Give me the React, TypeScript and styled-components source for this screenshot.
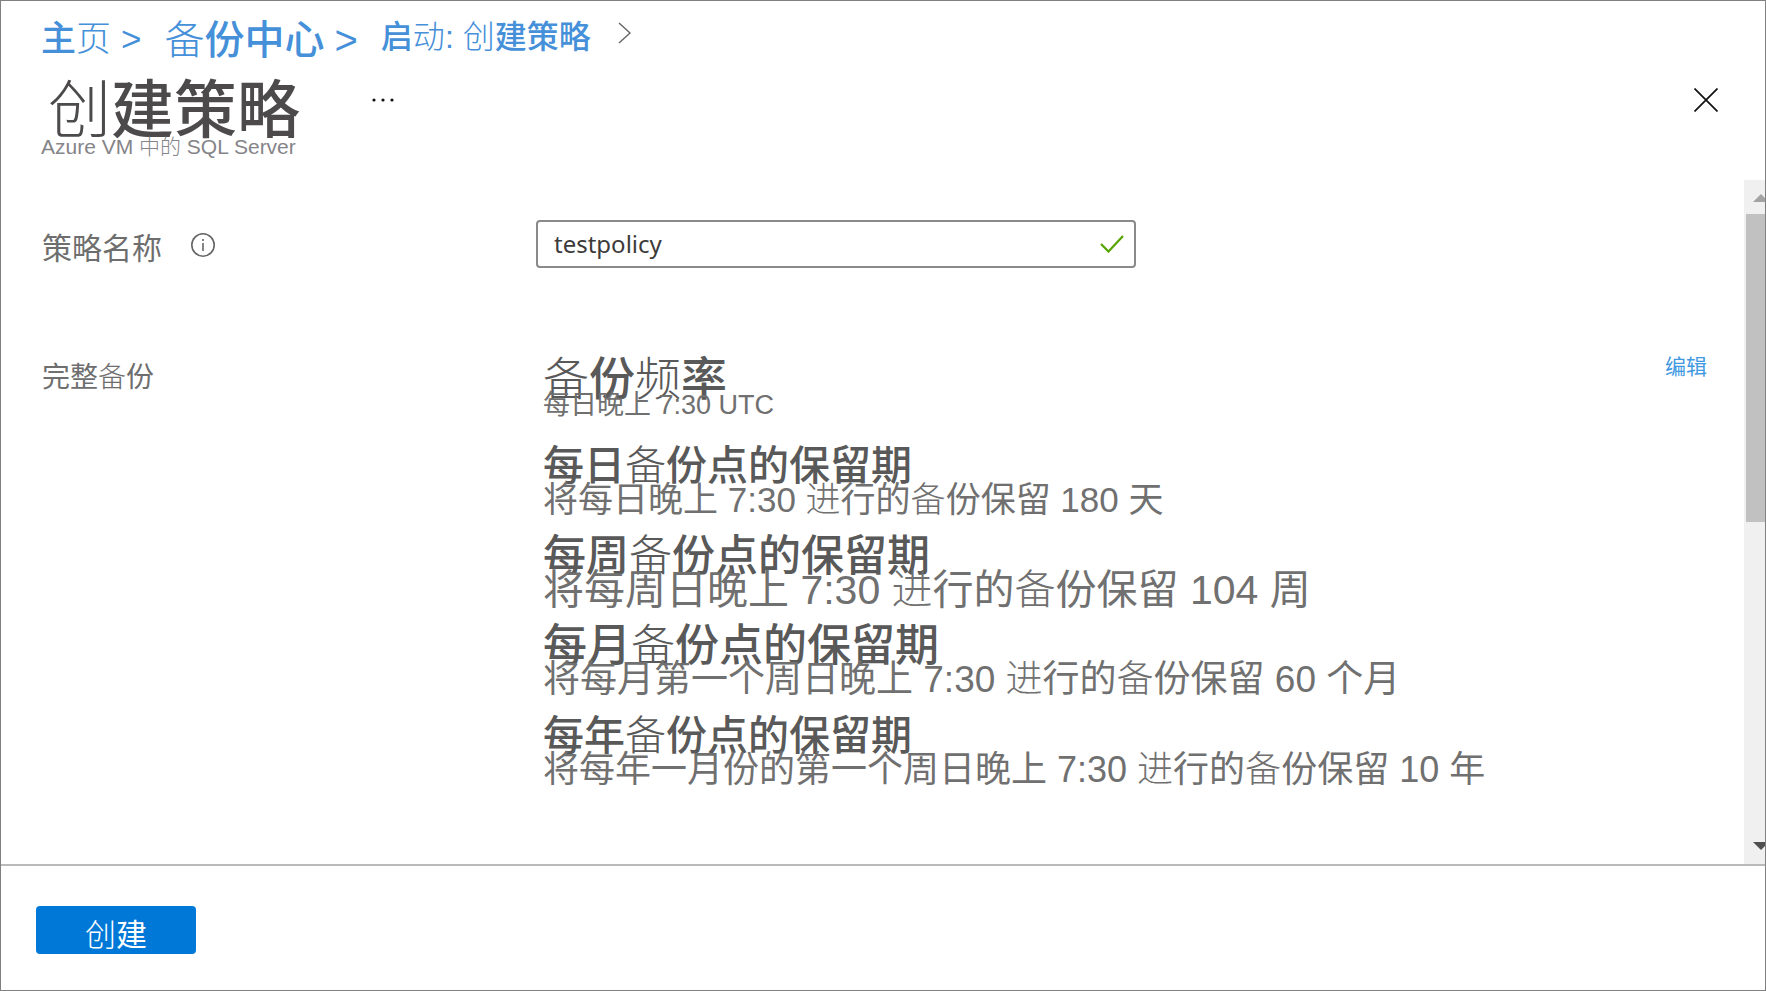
import React from "react";
import styled, { createGlobalStyle } from "styled-components";

const GlobalStyle = createGlobalStyle`
  *, *::before, *::after { box-sizing: border-box; }
  body {
    margin: 0;
    background: #fff;
    font-family: "Liberation Sans", "Noto Sans CJK SC", sans-serif;
  }
  h1, h2, p, dl, dt, dd, ol { margin: 0; padding: 0; font-weight: 400; }
`;

const Blade = styled.div`
  display: flex;
  flex-direction: column;
  min-height: 100vh;
  border: 1px solid #808080;
`;

const Light = styled.span`
  font-weight: 300;
`;

const Header = styled.header`
  padding: 16px 47px 0 40px;
  min-height: 179px;
`;

const Crumbs = styled.ol`
  display: flex;
  align-items: flex-start;
  height: 44px;
  list-style: none;
  color: #4590d9;
`;

const Crumb = styled.li<{ $size: number; $line: number }>`
  display: flex;
  align-items: center;
  gap: 10px;
  margin-right: 23px;
  font-size: ${(p) => p.$size}px;
  line-height: ${(p) => p.$line}px;
  font-weight: 500;
  white-space: nowrap;
`;

const CrumbChevron = styled.svg`
  margin: 5px 0 0 4px;
`;

const CrumbLink = styled.a`
  color: inherit;
  text-decoration: none;
`;

const TitleRow = styled.div`
  display: flex;
  align-items: flex-start;
  margin-top: 15px;
`;

const Title = styled.h1`
  padding: 2px 0 0 7px;
  font-size: 63px;
  line-height: 64px;
  font-weight: 500;
  color: #4c4a4a;
`;

const IconButton = styled.button`
  display: flex;
  align-items: center;
  justify-content: center;
  width: 32px;
  height: 32px;
  margin-top: 8px;
  padding: 0;
  border: 0;
  background: none;
  color: #111;
`;

const MoreButton = styled(IconButton)`
  margin-left: 67px;
`;

const CloseButton = styled(IconButton)`
  margin-left: auto;
  margin-right: -4px;
`;

const Subtitle = styled.p`
  font-size: 21px;
  line-height: 20px;
  margin-top: -5px;
  color: #858488;
`;

const Body = styled.div`
  display: flex;
  flex: 1;
`;

const Content = styled.main`
  flex: 1;
  min-width: 0;
  padding: 40px 36px 50px 41px;
`;

const FieldRow = styled.div`
  display: grid;
  grid-template-columns: 494px minmax(0, 1fr) auto;
  align-items: start;
`;

const PolicyRow = styled(FieldRow)`
  margin-bottom: 85px;
`;

const FieldLabel = styled.div<{ $size: number }>`
  display: flex;
  align-items: center;
  gap: 28px;
  font-size: ${(p) => p.$size}px;
  line-height: 44px;
  color: #6e6e6e;
`;

const NameLabel = styled(FieldLabel)`
  padding-top: 7px;
`;

const InfoIcon = styled.svg`
  margin-bottom: 8px;
`;

const InputBox = styled.div`
  display: flex;
  align-items: center;
  width: 100%;
  max-width: 600px;
  height: 48px;
  padding: 0 10px 0 16px;
  border: 2px solid #8a8a8a;
  border-radius: 4px;
`;

const NameInput = styled.input`
  flex: 1;
  min-width: 0;
  border: 0;
  outline: 0;
  padding: 0 0 2px;
  background: none;
  font: 24px "Noto Sans", sans-serif;
  color: #3c3b3a;
`;

const Schedule = styled.dl`
  display: grid;
  gap: 22px;
  padding-left: 7px;
  white-space: nowrap;
`;

const RuleTitle = styled.dt<{ $size: number }>`
  font-size: ${(p) => p.$size}px;
  line-height: 40px;
  font-weight: 500;
  color: #595959;
`;

const RuleText = styled.dd<{ $size: number }>`
  font-size: ${(p) => p.$size}px;
  line-height: 28px;
  color: #707070;
`;

const Rule = styled.div`
  display: flex;
  flex-direction: column;

  &:first-child {
    padding-top: 3px;
  }
  &:first-child ${RuleText} {
    margin: -8px 0 5px;
  }
`;

const EditLink = styled.a`
  padding-right: 1px;
  font-size: 21px;
  line-height: 22px;
  color: #3f99e0;
  text-decoration: none;
`;

const ScrollTrack = styled.div`
  display: flex;
  flex-direction: column;
  width: 21px;
  overflow: hidden;
  background: #f0f0f0;
`;

const ScrollThumb = styled.div`
  flex: 0 1 308px;
  margin: 12px 0 auto 2px;
  background: #c1c1c1;
`;

const Arrow = styled.svg`
  display: block;
  flex: none;
  width: 16px;
  height: 8px;
  margin: 14px 0 0 9px;
`;

const ArrowDown = styled(Arrow)`
  margin: 0 0 14px 9px;
`;

const Footer = styled.footer`
  padding: 40px 35px 36px;
  border-top: 2px solid #bababa;
`;

const CreateButton = styled.button`
  display: block;
  width: 160px;
  height: 48px;
  padding: 12px 0 0;
  border: 0;
  border-radius: 4px;
  background: #0078d7;
  color: #fff;
  font-family: inherit;
  font-size: 31px;
  line-height: 36px;
`;

type RuleData = { title: string; text: string; titleSize: number; textSize: number };

const rules: RuleData[] = [
  { title: "备份频率", text: "每日晚上 7:30 UTC", titleSize: 46, textSize: 27 },
  { title: "每日备份点的保留期", text: "将每日晚上 7:30 进行的备份保留 180 天", titleSize: 41, textSize: 35 },
  { title: "每周备份点的保留期", text: "将每周日晚上 7:30 进行的备份保留 104 周", titleSize: 43, textSize: 41 },
  { title: "每月备份点的保留期", text: "将每月第一个周日晚上 7:30 进行的备份保留 60 个月", titleSize: 44, textSize: 37 },
  { title: "每年备份点的保留期", text: "将每年一月份的第一个周日晚上 7:30 进行的备份保留 10 年", titleSize: 41, textSize: 36 },
];

const Mixed = ({ children }: { children: string }) => (
  <>
    {children.split(/([备频进创页动])/).map((part, i) => (i % 2 ? <Light key={i}>{part}</Light> : part))}
  </>
);

export default function App() {
  return (
    <>
      <GlobalStyle />
      <Blade>
        <Header>
          <nav>
            <Crumbs>
              <Crumb $size={35} $line={44}>
                <CrumbLink href="#home"><Mixed>主页</Mixed></CrumbLink>
                <span>&gt;</span>
              </Crumb>
              <Crumb $size={40} $line={46}>
                <CrumbLink href="#center"><Mixed>备份中心</Mixed></CrumbLink>
                <span>&gt;</span>
              </Crumb>
              <Crumb $size={32} $line={40}>
                <CrumbLink href="#start"><Mixed>启动: 创建策略</Mixed></CrumbLink>
              </Crumb>
              <CrumbChevron width="14" height="22" viewBox="0 0 14 22" fill="none" stroke="#666" strokeWidth="1.4">
                <path d="M1 1l11 10L1 21" />
              </CrumbChevron>
            </Crumbs>
          </nav>
          <TitleRow>
            <Title><Mixed>创建策略</Mixed></Title>
            <MoreButton type="button" aria-label="更多">
              <svg width="24" height="4" viewBox="0 0 24 4" fill="currentColor">
                <circle cx="3" cy="2" r="1.6" />
                <circle cx="12" cy="2" r="1.6" />
                <circle cx="21" cy="2" r="1.6" />
              </svg>
            </MoreButton>
            <CloseButton type="button" aria-label="关闭">
              <svg width="24" height="24" viewBox="0 0 24 24" fill="none" stroke="currentColor" strokeWidth="1.7">
                <path d="M.5.5l23 23M23.5.5l-23 23" />
              </svg>
            </CloseButton>
          </TitleRow>
          <Subtitle>Azure VM <Light>中的</Light> SQL Server</Subtitle>
        </Header>
        <Body>
          <Content>
            <PolicyRow>
              <NameLabel $size={30}>
                <label htmlFor="policy-name">策略名称</label>
                <InfoIcon width="26" height="26" viewBox="0 0 26 26" fill="none" stroke="#666" strokeWidth="1.6">
                  <circle cx="13" cy="13" r="11.2" />
                  <path d="M13 11v8M13 7v2" />
                </InfoIcon>
              </NameLabel>
              <InputBox>
                <NameInput id="policy-name" defaultValue="testpolicy" />
                <svg width="24" height="18" viewBox="0 0 24 18" fill="none" stroke="#57a300" strokeWidth="2.2">
                  <path d="M1 9l7.500 7.500L23 1" />
                </svg>
              </InputBox>
            </PolicyRow>
            <FieldRow>
              <FieldLabel $size={28}><span><Mixed>完整备份</Mixed></span></FieldLabel>
              <Schedule>
                {rules.map((r) => (
                  <Rule key={r.title}>
                    <RuleTitle $size={r.titleSize}><Mixed>{r.title}</Mixed></RuleTitle>
                    <RuleText $size={r.textSize}><Mixed>{r.text}</Mixed></RuleText>
                  </Rule>
                ))}
              </Schedule>
              <EditLink href="#edit">编辑</EditLink>
            </FieldRow>
          </Content>
          <ScrollTrack>
            <Arrow viewBox="0 0 16 8"><path d="M0 8l8-8 8 8z" fill="#a3a3a3" /></Arrow>
            <ScrollThumb />
            <ArrowDown viewBox="0 0 16 8"><path d="M0 0h16L8 8z" fill="#505050" /></ArrowDown>
          </ScrollTrack>
        </Body>
        <Footer>
          <CreateButton type="button"><Mixed>创建</Mixed></CreateButton>
        </Footer>
      </Blade>
    </>
  );
}
